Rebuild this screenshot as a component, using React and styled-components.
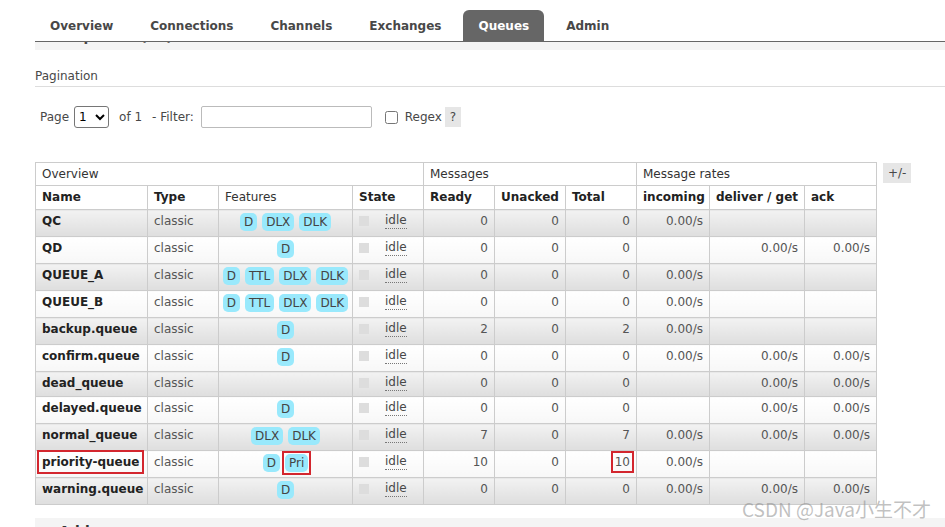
import React from 'react';
import styled, { createGlobalStyle } from 'styled-components';

const GlobalStyle = createGlobalStyle`
	html, body {
		margin: 0;
		padding: 0;
		overflow: hidden;
		background: #fff;
	}
	body {
		font-family: "DejaVu Sans", Verdana, sans-serif;
		font-size: 12px;
		color: #484848;
	}
`;

const TABS = [ 'Overview', 'Connections', 'Channels', 'Exchanges', 'Queues', 'Admin' ];

const QUEUES = [
	{ name: 'QC', features: [ 'D', 'DLX', 'DLK' ], ready: 0, unacked: 0, total: 0, incoming: '0.00/s', deliver: '', ack: '' },
	{ name: 'QD', features: [ 'D' ], ready: 0, unacked: 0, total: 0, incoming: '', deliver: '0.00/s', ack: '0.00/s' },
	{ name: 'QUEUE_A', features: [ 'D', 'TTL', 'DLX', 'DLK' ], ready: 0, unacked: 0, total: 0, incoming: '0.00/s', deliver: '', ack: '' },
	{ name: 'QUEUE_B', features: [ 'D', 'TTL', 'DLX', 'DLK' ], ready: 0, unacked: 0, total: 0, incoming: '0.00/s', deliver: '', ack: '' },
	{ name: 'backup.queue', features: [ 'D' ], ready: 2, unacked: 0, total: 2, incoming: '0.00/s', deliver: '', ack: '' },
	{ name: 'confirm.queue', features: [ 'D' ], ready: 0, unacked: 0, total: 0, incoming: '0.00/s', deliver: '0.00/s', ack: '0.00/s' },
	{ name: 'dead_queue', features: [], ready: 0, unacked: 0, total: 0, incoming: '', deliver: '0.00/s', ack: '0.00/s' },
	{ name: 'delayed.queue', features: [ 'D' ], ready: 0, unacked: 0, total: 0, incoming: '', deliver: '0.00/s', ack: '0.00/s' },
	{ name: 'normal_queue', features: [ 'DLX', 'DLK' ], ready: 7, unacked: 0, total: 7, incoming: '0.00/s', deliver: '0.00/s', ack: '0.00/s' },
	{ name: 'priority-queue', features: [ 'D', 'Pri' ], ready: 10, unacked: 0, total: 10, incoming: '0.00/s', deliver: '', ack: '', marked: true },
	{ name: 'warning.queue', features: [ 'D' ], ready: 0, unacked: 0, total: 0, incoming: '0.00/s', deliver: '0.00/s', ack: '0.00/s' }
];

const COLS = [ 112, 71, 134, 71, 71, 71, 71, 73, 95, 72 ];

const Feature = ({ label }) => {
	if (label === 'Pri') {
		return (
			<StyledMark>
				<StyledPill>{label}</StyledPill>
			</StyledMark>
		);
	}
	return <StyledPill>{label}</StyledPill>;
};

const App = () => {
	return (
		<StyledPage>
			<GlobalStyle />
			<StyledNav>
				{TABS.map((t) => (
					<StyledTab key={t} active={t === 'Queues'}>
						{t}
					</StyledTab>
				))}
			</StyledNav>
			<StyledBand>
				<h2>All queues (11)</h2>
			</StyledBand>

			<StyledSection>
				<h3>Pagination</h3>
				<StyledPager>
					<span>Page</span>
					<StyledSelect defaultValue="1">
						<option value="1">1</option>
					</StyledSelect>
					<StyledLabel gap={10}>of 1</StyledLabel>
					<StyledLabel gap={10}>- Filter:</StyledLabel>
					<StyledInput type="text" />
					<StyledCheck type="checkbox" />
					<span>Regex</span>
					<StyledHelp>?</StyledHelp>
				</StyledPager>
			</StyledSection>

			<StyledTableRow>
				<StyledTable>
					<colgroup>
						{COLS.map((w, i) => <col key={i} style={{ width: w }} />)}
					</colgroup>
					<thead>
						<tr>
							<StyledGroupTh colSpan={4}>Overview</StyledGroupTh>
							<StyledGroupTh colSpan={3}>Messages</StyledGroupTh>
							<StyledGroupTh colSpan={3}>Message rates</StyledGroupTh>
						</tr>
						<tr>
							<StyledTh>Name</StyledTh>
							<StyledTh>Type</StyledTh>
							<StyledTh plain>Features</StyledTh>
							<StyledTh>State</StyledTh>
							<StyledTh>Ready</StyledTh>
							<StyledTh>Unacked</StyledTh>
							<StyledTh>Total</StyledTh>
							<StyledTh>incoming</StyledTh>
							<StyledTh>deliver / get</StyledTh>
							<StyledTh>ack</StyledTh>
						</tr>
					</thead>
					<tbody>
						{QUEUES.map((q, i) => (
							<StyledTr key={q.name} alt={i % 2 === 0}>
								<StyledTd>
									<StyledName marked={q.marked}>{q.name}</StyledName>
								</StyledTd>
								<StyledTd>classic</StyledTd>
								<StyledTd align="center">
									<StyledFeatures>
										{q.features.map((f) => <Feature key={f} label={f} />)}
									</StyledFeatures>
								</StyledTd>
								<StyledTd>
									<StyledState>
										<StyledKey />
										<abbr>idle</abbr>
									</StyledState>
								</StyledTd>
								<StyledTd align="right">{q.ready}</StyledTd>
								<StyledTd align="right">{q.unacked}</StyledTd>
								<StyledTd align="right">
									<StyledTotal marked={q.marked}>{q.total}</StyledTotal>
								</StyledTd>
								<StyledTd align="right">{q.incoming}</StyledTd>
								<StyledTd align="right">{q.deliver}</StyledTd>
								<StyledTd align="right">{q.ack}</StyledTd>
							</StyledTr>
						))}
					</tbody>
				</StyledTable>
				<StyledToggle>+/-</StyledToggle>
			</StyledTableRow>

			<StyledAddSection>
				<h2>
					<StyledDash />Add a new queue
				</h2>
			</StyledAddSection>

			<StyledWatermark>CSDN @Java小生不才</StyledWatermark>
		</StyledPage>
	);
};

export default App;

const StyledPage = styled.div`
	position: relative;
	height: 527px;
	overflow: hidden;
	padding-left: 35px;
`;

const StyledNav = styled.div`
	display: flex;
	padding-top: 10px;
	border-bottom: 1px solid #666;
`;

const StyledTab = styled.div`
	height: 31px;
	box-sizing: border-box;
	padding: 2px 15px 0;
	line-height: 29px;
	margin-right: 7px;
	font-weight: bold;
	font-size: 12px;
	border-radius: 6px 6px 0 0;
	color: ${({ active }) => (active ? '#fff' : '#484848')};
	background: ${({ active }) => (active ? '#666' : 'transparent')};
`;

const StyledBand = styled.div`
	display: flow-root;
	height: 8px;
	background: #f4f4f4;
	overflow: hidden;

	h2 {
		margin: -14px 0 0 18px;
		font-size: 14px;
		line-height: 16px;
		font-weight: bold;
		color: #484848;
	}
`;

const StyledSection = styled.div`
	h3 {
		margin: 18px 0 0;
		padding-bottom: 2px;
		font-size: 12px;
		line-height: 16px;
		font-weight: normal;
		color: #484848;
		border-bottom: 1px solid #ddd;
	}
`;

const StyledPager = styled.div`
	display: flex;
	align-items: center;
	height: 22px;
	margin-top: 19px;
	padding-left: 5px;
`;

const StyledSelect = styled.select`
	width: 35px;
	height: 22px;
	margin-left: 5px;
	font-family: "DejaVu Sans", Verdana, sans-serif;
	font-size: 12px;
	border: 1px solid #767676;
	border-radius: 3px;
	background: #fff;
`;

const StyledLabel = styled.span`
	margin-left: ${({ gap }) => gap}px;
`;

const StyledInput = styled.input`
	width: 171px;
	height: 22px;
	box-sizing: border-box;
	margin: 0 0 0 7px;
	border: 1px solid #bbb;
	border-radius: 2px;
`;

const StyledCheck = styled.input`
	width: 13px;
	height: 13px;
	margin: 0 7px 0 13px;
`;

const StyledHelp = styled.span`
	display: inline-block;
	width: 16px;
	height: 20px;
	line-height: 20px;
	margin-left: 3px;
	text-align: center;
	background: #e6e6e6;
	color: #484848;
`;

const StyledTableRow = styled.div`
	display: flex;
	align-items: flex-start;
	margin-top: 34px;
`;

const StyledTable = styled.table`
	table-layout: fixed;
	border-collapse: collapse;
	width: 842px;
	color: #484848;
`;

const StyledGroupTh = styled.th`
	padding: 3px 6px;
	line-height: 16px;
	font-weight: normal;
	text-align: left;
	border: 1px solid #ccc;
	color: #333;
	background: #fff;
`;

const StyledTh = styled.th`
	padding: 4px 6px;
	line-height: 15px;
	font-weight: ${({ plain }) => (plain ? 'normal' : 'bold')};
	text-align: left;
	white-space: nowrap;
	border: 1px solid #ccc;
	color: ${({ plain }) => (plain ? '#333' : '#222')};
	background: #fff;
`;

const StyledTr = styled.tr`
	td {
		background: ${({ alt }) =>
			alt ? 'linear-gradient(#f2f2f2, #dedede)' : 'linear-gradient(#fff, #f7f7f7)'};
	}
`;

const StyledTd = styled.td`
	height: 16px;
	padding: 3px 6px 5px;
	line-height: 16px;
	vertical-align: top;
	white-space: nowrap;
	text-align: ${({ align }) => align || 'left'};
	border: 1px solid #ccc;
	color: #555;
`;

const StyledName = styled.span`
	font-weight: bold;
	color: #222;
	outline: ${({ marked }) => (marked ? '2px solid #d3262e' : 'none')};
	outline-offset: 3px;
`;

const StyledTotal = styled.span`
	outline: ${({ marked }) => (marked ? '2px solid #d3262e' : 'none')};
	outline-offset: 2px;
`;

const StyledFeatures = styled.div`
	display: flex;
	justify-content: center;
	align-items: flex-start;
	gap: 5px;
`;

const StyledPill = styled.span`
	display: block;
	padding: 1px 4px;
	line-height: 16px;
	border-radius: 5px;
	background: #99e9fc;
	color: #444;
`;

const StyledMark = styled.span`
	display: block;
	margin: -3px;
	padding: 1px;
	border: 2px solid #d3262e;
`;

const StyledState = styled.div`
	display: flex;
	align-items: flex-start;
	height: 16px;

	abbr {
		margin-left: 16px;
		text-decoration: none;
		border-bottom: 1px dotted #777;
		line-height: 15px;
		color: #484848;
	}
`;

const StyledKey = styled.span`
	width: 10px;
	height: 10px;
	margin-top: 3px;
	background: #ddd;
`;

const StyledToggle = styled.span`
	margin: 1px 0 0 6px;
	padding: 0 5px;
	height: 20px;
	line-height: 20px;
	background: #e6e6e6;
	color: #484848;
`;

const StyledAddSection = styled.div`
	margin-top: 13px;
	height: 40px;
	background: #f4f4f4;

	h2 {
		margin: 0;
		padding: 5px 0 0 6px;
		font-size: 14px;
		line-height: 16px;
		font-weight: bold;
		color: #333;
		display: flex;
		align-items: center;
	}
`;

const StyledDash = styled.span`
	display: inline-block;
	width: 10px;
	height: 3px;
	margin-right: 8px;
	background: #666;
`;

const StyledWatermark = styled.div`
	position: absolute;
	right: 14px;
	bottom: 5px;
	font-family: "Noto Sans CJK SC", "Noto Sans", sans-serif;
	font-size: 19px;
	color: rgba(140, 140, 140, 0.55);
	white-space: nowrap;
`;
